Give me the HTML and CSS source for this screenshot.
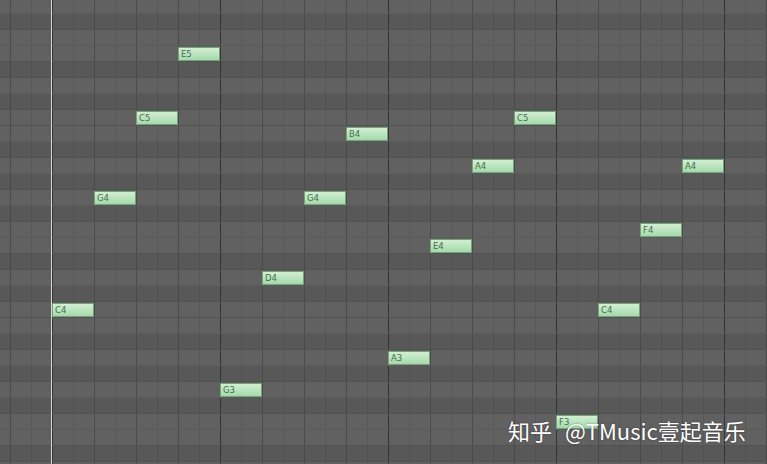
FILE: index.html
```html
<!DOCTYPE html>
<html lang="zh">
<head>
<meta charset="utf-8">
<title>Piano Roll</title>
<link rel="stylesheet" href="styles.css">
</head>
<body>
<div class="roll">
  <div class="rows">
    <div class="row w"></div><div class="row b"></div><div class="row w"></div><div class="row w ef"></div>
    <div class="row b"></div><div class="row w"></div><div class="row b"></div><div class="row w bc"></div>
    <div class="row w"></div><div class="row b"></div><div class="row w"></div><div class="row b"></div>
    <div class="row w"></div><div class="row b"></div><div class="row w"></div><div class="row w ef"></div>
    <div class="row b"></div><div class="row w"></div><div class="row b"></div><div class="row w bc"></div>
    <div class="row w"></div><div class="row b"></div><div class="row w"></div><div class="row b"></div>
    <div class="row w"></div><div class="row b"></div><div class="row w"></div><div class="row w ef"></div>
    <div class="row b"></div><div class="row w"></div>
  </div>
  <div class="playhead"></div>
  <div class="note" style="left:178px;top:47px">E5</div>
  <div class="note" style="left:136px;top:111px">C5</div>
  <div class="note" style="left:514px;top:111px">C5</div>
  <div class="note" style="left:346px;top:127px">B4</div>
  <div class="note" style="left:472px;top:159px">A4</div>
  <div class="note" style="left:682px;top:159px">A4</div>
  <div class="note" style="left:94px;top:191px">G4</div>
  <div class="note" style="left:304px;top:191px">G4</div>
  <div class="note" style="left:640px;top:223px">F4</div>
  <div class="note" style="left:430px;top:239px">E4</div>
  <div class="note" style="left:262px;top:271px">D4</div>
  <div class="note" style="left:52px;top:303px">C4</div>
  <div class="note" style="left:598px;top:303px">C4</div>
  <div class="note" style="left:388px;top:351px">A3</div>
  <div class="note" style="left:220px;top:383px">G3</div>
  <div class="note" style="left:556px;top:415px">F3</div>
  <div class="watermark">知乎 @TMusic壹起音乐</div>
</div>
</body>
</html>
```
FILE: styles.css
```css
html, body {
  margin: 0;
  padding: 0;
  width: 767px;
  height: 464px;
  overflow: hidden;
  background: #5c5c5c;
}

.roll {
  position: relative;
  width: 767px;
  height: 464px;
  overflow: hidden;
}

.rows {
  display: flex;
  flex-direction: column;
  margin-top: -2px;
}

.row {
  height: 16px;
  box-sizing: border-box;
  border-bottom: 1px solid rgba(0, 0, 0, 0.06);
  background-image:
    linear-gradient(to right, #343434 0 1px, transparent 1px),
    linear-gradient(to right, #4a4a4a 0 1px, transparent 1px),
    linear-gradient(to right, rgba(0, 0, 0, 0.08) 0 1px, transparent 1px);
  background-size: 168px 100%, 42px 100%, 42px 100%;
  background-position: 52px 0, 10px 0, 31px 0;
  background-repeat: repeat-x;
}

.row.w { background-color: #616161; }
.row.b { background-color: #585858; }
.row.ef, .row.bc { border-bottom-color: rgba(0, 0, 0, 0.15); }

.playhead {
  position: absolute;
  left: 51px;
  top: 0;
  width: 1px;
  height: 464px;
  background: #d8d8d8;
}

.note {
  position: absolute;
  width: 42px;
  height: 14px;
  box-sizing: border-box;
  border: 1px solid #74a279;
  background: linear-gradient(to bottom, #d2f0d2, #a5d9ab);
  color: #476d4d;
  font-family: "DejaVu Sans", sans-serif;
  font-size: 8.5px;
  line-height: 12px;
  padding-left: 2px;
}

.watermark {
  position: absolute;
  left: 508px;
  top: 414px;
  color: #ffffff;
  font-family: "Noto Sans CJK SC", "Noto Sans", sans-serif;
  font-size: 22px;
  line-height: 32px;
  white-space: nowrap;
  word-spacing: 8px;
  text-shadow: 0 0 2px rgba(0, 0, 0, 0.45);
}
```
